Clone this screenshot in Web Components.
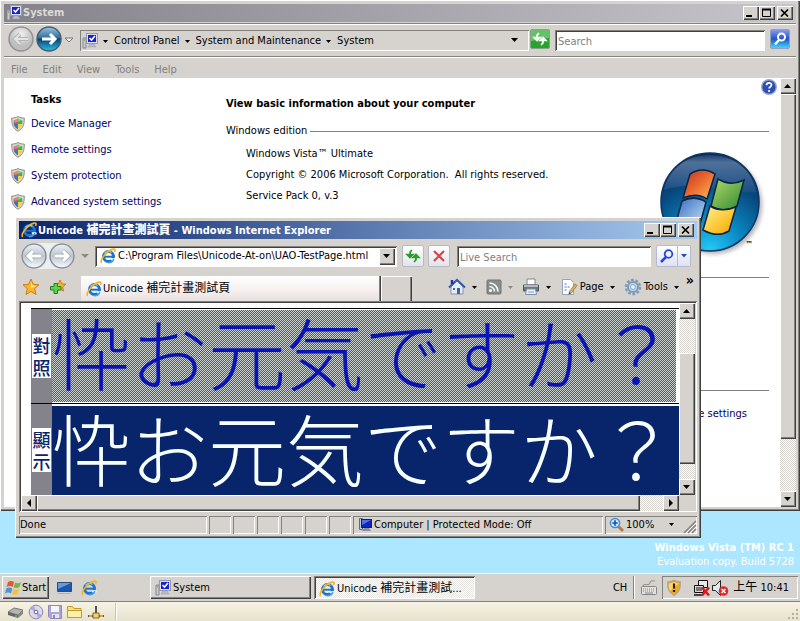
<!DOCTYPE html>
<html lang="en">
<head>
<meta charset="utf-8">
<title>Desktop</title>
<style>
html, body { margin: 0; height: 100%; overflow: hidden; }
body { --face: #d6d3ce; --navy: #0a246a; --link: #000066;
  --out: inset 1px 1px #fff, inset -1px -1px #404040, inset -2px -2px #84827e;
  --in: inset 1px 1px #84827e, inset -1px -1px #fff, inset 2px 2px #404040;
  --thin: inset 1px 1px #84827e, inset -1px -1px #fff;
  font: 11px/14px "DejaVu Sans Condensed", "Noto Sans CJK TC", sans-serif; color: #000; }
</style>
</head>
<body>
<desk-shell></desk-shell>
<script>
const base = `<style>
*{box-sizing:border-box}
button,input{font:inherit;color:inherit;margin:0;border:0;padding:0;background:none;border-radius:0}
a{color:inherit;text-decoration:none}
</style>`;
function define(name, html, setup) {
  const t = document.createElement('template');
  t.innerHTML = base + html;
  customElements.define(name, class extends HTMLElement {
    constructor() { super(); this.attachShadow({ mode: 'open' }).append(t.content.cloneNode(true)); }
    connectedCallback() { if (setup) setup(this, this.shadowRoot); }
  });
}

const monitor = `<path d="M1 5h3v10H1z" fill="#c9cdd2" stroke="#888"/><path d="M2 7h1" stroke="#3a3"/><rect x="4.500" y=".5" width="11" height="10" fill="#dde" stroke="#99a"/><rect x="6" y="2" width="8" height="7" fill="#1322d8"/><path d="M7.500 5l2 2 3.500-4" fill="none" stroke="#fff" stroke-width="1.600"/><path d="M8 11h4l2 3H6z" fill="#b8bcc4" stroke="#99a" stroke-width=".5"/>`;
const ie = `<circle cx="8.500" cy="8.500" r="5" fill="none" stroke="#1d74cf" stroke-width="3"/><path d="M5 8.700h8.500" stroke="#1d74cf" stroke-width="2"/><path d="M10.500 10.300h5v2.200h-4z" fill="#fff"/><path d="M13.900 11c-1 2.600-3.200 3.900-5.900 3.800" fill="none" stroke="#3ea1ee" stroke-width="1.600"/><path d="M4.500 5.200a5.200 5.200 0 0 1 7-.7" fill="none" stroke="#8cd0fa" stroke-width="1.200"/><path d="M1.700 14.800C-.8 12.500 7 2.200 13.200 1.100c2.200-.3 2.200 1.300 1.300 2.800" fill="none" stroke="#f2b51b" stroke-width="1.600"/>`;
const icons = {
  monitor: [16, 16, monitor],
  ie: [16, 16, ie],
  screen: [16, 16, `<path d="M3.500 1.500h3v11h-3z" fill="#c9cdd2" stroke="#667"/><rect x="5.500" y="2.500" width="10" height="8" fill="#1026b8" stroke="#223"/><path d="M6 3h9l-9 5z" fill="#4c72ee"/><path d="M8 11h5l2 3H6z" fill="#8b9098"/>`],
  shield: [16, 18, `<path d="M8 1.500c2 1.200 4 1.600 6.300 1.600 0 6.500-1 10-6.300 13.200C2.700 13.100 1.700 9.600 1.700 3.100 4 3.100 6 2.700 8 1.500z" fill="#dcdad2" stroke="#8b8b85"/><path d="M8 3.500V9H3.700V4.900C5.400 4.800 6.700 4.400 8 3.500z" fill="#d2504a"/><path d="M8 3.500V9h4.300V4.900C10.600 4.800 9.300 4.400 8 3.500z" fill="#4caf45"/><path d="M3.700 9H8v5.500C5.500 13 4.100 11.400 3.700 9z" fill="#3c74cd"/><path d="M12.300 9H8v5.500c2.500-1.500 3.900-3.100 4.300-5.500z" fill="#f4d04a"/><path d="M3 4c4 0 7-1 10 1l-8 3z" fill="#fff" opacity=".3"/>`],
  backOff: [26, 26, `<defs><radialGradient id="g" cy=".3"><stop offset="0" stop-color="#f2f2f2"/><stop offset="1" stop-color="#bdbdbd"/></radialGradient></defs><circle cx="13" cy="13" r="12" fill="url(#g)" stroke="#929292" stroke-width="1.500"/><path d="M20 13H8M12 8l-5 5 5 5" fill="none" stroke="#b4b4b4" stroke-width="4"/><path d="M20 13H8M12 8l-5 5 5 5" fill="none" stroke="#e4e4e4" stroke-width="2"/>`],
  fwdOn: [26, 26, `<defs><linearGradient id="g" x2="0" y2="1"><stop offset="0" stop-color="#9fc4de"/><stop offset=".45" stop-color="#2f6f9f"/><stop offset=".5" stop-color="#08426f"/><stop offset="1" stop-color="#2bc0ec"/></linearGradient></defs><circle cx="13" cy="13" r="12" fill="url(#g)" stroke="#45606f" stroke-width="1.500"/><path d="M6 13h12M14 8l5 5-5 5" fill="none" stroke="#fff" stroke-width="3"/>`],
  ieBack: [26, 26, `<defs><linearGradient id="g" x2="0" y2="1"><stop offset="0" stop-color="#eef1f4"/><stop offset=".5" stop-color="#bcc5cf"/><stop offset="1" stop-color="#fbfcff"/></linearGradient></defs><circle cx="13" cy="13" r="12" fill="url(#g)" stroke="#87929c" stroke-width="1.500"/><path d="M20 13H8M12 8l-5 5 5 5" fill="none" stroke="#9aa9b8" stroke-width="4.500"/><path d="M20 13H8M12 8l-5 5 5 5" fill="none" stroke="#fff" stroke-width="3"/>`],
  ieFwd: [26, 26, `<defs><linearGradient id="g" x2="0" y2="1"><stop offset="0" stop-color="#eef1f4"/><stop offset=".5" stop-color="#bcc5cf"/><stop offset="1" stop-color="#fbfcff"/></linearGradient></defs><circle cx="13" cy="13" r="12" fill="url(#g)" stroke="#87929c" stroke-width="1.500"/><path d="M6 13h12M14 8l5 5-5 5" fill="none" stroke="#9aa9b8" stroke-width="4.500"/><path d="M6 13h12M14 8l5 5-5 5" fill="none" stroke="#fff" stroke-width="3"/>`],
  go: [20, 20, `<rect x=".5" y=".5" width="19" height="19" rx="1.500" fill="#27a32e" stroke="#87a487"/><path d="M1 1h18v8L1 12z" fill="#73c975" opacity=".8"/><path d="M9 4L7 6v4M4 8.500h6L7 11.500zM11 16l2-2v-4M10 11.500h6L13 8.500z" fill="#fff" stroke="#fff" stroke-width="1.600"/>`],
  refresh: [20, 20, `<path d="M9 4L7 6v4M4 8.500h6L7 11.500zM11 16l2-2v-4M10 11.500h6L13 8.500z" fill="#2c9d2c" stroke="#2c9d2c" stroke-width="1.600"/>`],
  stop: [20, 20, `<path d="M5 5l10 10M15 5L5 15" stroke="#d5474b" stroke-width="2.200"/>`],
  find: [20, 20, `<defs><linearGradient id="g" x2="0" y2="1"><stop offset="0" stop-color="#8c9df0"/><stop offset=".5" stop-color="#1f55cf"/><stop offset="1" stop-color="#46e0f4"/></linearGradient></defs><rect x=".5" y=".5" width="19" height="19" rx="1.500" fill="url(#g)" stroke="#8fa2c2"/><circle cx="11.500" cy="8" r="3.500" fill="none" stroke="#fff" stroke-width="2"/><path d="M9 11l-4 4.500" stroke="#fff" stroke-width="2.500"/>`],
  findBlue: [16, 16, `<circle cx="9.500" cy="6" r="3.800" fill="#e9f2ff" stroke="#2746e0" stroke-width="1.800"/><path d="M7 9l-5 5" stroke="#2746e0" stroke-width="2.500"/>`],
  help: [16, 16, `<circle cx="8" cy="8" r="7.300" fill="#2d4fb0" stroke="#9aa7cf" stroke-width="1.400"/><path d="M5.500 6.300c0-3.300 5-3.200 5-.3 0 1.700-2.400 1.800-2.400 3.600M8.100 11v2" fill="none" stroke="#fff" stroke-width="1.700"/>`],
  down: [8, 8, `<path d="M0 2h7L3.500 6z" fill="#000"/>`],
  downSm: [6, 8, `<path d="M0 3h5L2.500 6z" fill="#000"/>`],
  downBlue: [8, 8, `<path d="M1 2h6L4 5.500z" fill="#2746c0"/>`],
  downGray: [8, 8, `<path d="M0 2h8L4 6z" fill="#8d8b88"/>`],
  downGraySm: [6, 8, `<path d="M0 3h5L2.500 6z" fill="#8d8b88"/>`],
  downHollow: [10, 8, `<path d="M1 2h8L5 6z" fill="#eee" stroke="#777"/>`],
  star: [18, 18, `<path d="M9 1l2.300 5.300 5.700.5-4.300 3.800L14 16.500 9 13.400 4 16.500l1.300-5.900L1 6.800l5.700-.5z" fill="#fbb528" stroke="#d47c12"/><path d="M9 3.500l1.500 4 4 .5-5.500 2z" fill="#ffe9a0"/>`],
  addStar: [18, 18, `<path d="M11 2l1.700 3.800 4.200.4-3.200 2.800.9 4.200-3.600-2.200-3.600 2.200 1-4.200L5.200 6.200l4.200-.4z" fill="#fbb528" stroke="#d47c12"/><path d="M5 5.500h3.500v3H12V12H8.500v3.500H5V12H1.500V8.500H5z" fill="#5fd253" stroke="#18851b"/>`],
  home: [18, 18, `<path d="M3 9v7h12V9L9 3z" fill="#e4eef8" stroke="#7d93b5"/><path d="M1 9.500L9 1.800l8 7.700" fill="none" stroke="#3a56b0" stroke-width="2"/><path d="M4 2v4" stroke="#1c36a8" stroke-width="2.500"/><path d="M9 10h3v6H9z" fill="#4a6189"/><path d="M5 10h2v2H5z" fill="#3b62c8"/>`],
  rss: [16, 16, `<rect x="1" y="1" width="14" height="14" rx="1" fill="#8b8b8b" stroke="#757575"/><circle cx="4.500" cy="11.500" r="1.500" fill="#fff"/><path d="M3.500 7.500a5 5 0 0 1 5 5M3.500 4a8.500 8.500 0 0 1 8.500 8.500" fill="none" stroke="#fff" stroke-width="1.600"/>`],
  printer: [18, 18, `<path d="M5 1h8v6H5z" fill="#fff" stroke="#888"/><path d="M1.500 7h15v6h-15z" fill="#6f7780" stroke="#4c535b"/><path d="M2 7h14v2H2z" fill="#b4bac0"/><path d="M4.500 11h9l1 5.500h-11z" fill="#e8f2fc" stroke="#7f8fa3"/><path d="M6 14h6" stroke="#6fa4d8"/>`],
  page: [18, 18, `<path d="M2.500 1.500h8l3 3v12h-11z" fill="#fff" stroke="#96a4b8"/><path d="M4.500 6h3M4.500 9h5M4.500 12h3" stroke="#4b6fc0" stroke-dasharray="2 1"/><path d="M9 14l6-8 2 1.500-6 8z" fill="#d9b26a" stroke="#8f6c36" stroke-width=".7"/><path d="M9 14l-.5 2.500L11 15.500z" fill="#444"/>`],
  gear: [18, 18, `<circle cx="9" cy="9" r="7" fill="none" stroke="#7b9cbc" stroke-width="2.500" stroke-dasharray="2.700 1.700"/><circle cx="9" cy="9" r="5" fill="#c6dcee" stroke="#7b9cbc" stroke-width="2"/><circle cx="9" cy="9" r="2.500" fill="#f4f4f2" stroke="#86a4c0"/>`],
  zoom: [16, 16, `<path d="M9 9l5 5" stroke="#b87a4a" stroke-width="3"/><circle cx="6" cy="6" r="4.600" fill="#cfe8ff" stroke="#4a8ed0" stroke-width="1.500"/><path d="M6 3.300v5.400M3.300 6h5.400" stroke="#1456b0" stroke-width="1.700"/>`],
  grip: [14, 14, `<path d="M13 1L1 13M13 5l-8 8M13 9l-4 4" stroke="#84827e" stroke-width="1.600"/><path d="M14 2L3 13M14 6l-7 7M14 10l-3 3" stroke="#fff"/>`],
  dots: [12, 12, `<path d="M9 2h2M5 6h2M9 6h2M1 10h2M5 10h2M9 10h2" stroke="#b5b09c" stroke-width="2"/>`],
  flag: [18, 18, `<path d="M4 3c2-1.500 4-1.500 6 0L8.700 8C7 6.800 5 6.800 2.700 8z" fill="#e4572b"/><path d="M11 3.500c2 1 4 1 6-.3L15.500 8c-2 1.300-4 1.300-5.800.3z" fill="#72b840"/><path d="M2.300 9.500c2-1.300 4-1.300 6 0L7 14.500c-2-1.200-4-1.200-6 0z" fill="#4b93dc"/><path d="M9.400 10c2 1 4 1 5.800-.3l-1.400 5c-2 1.300-4 1.300-5.800.3z" fill="#f8c22e"/>`],
  desk: [18, 16, `<path d="M1.500 2.500h14v9h-14z" fill="#1d57ac" stroke="#3a4a60"/><path d="M2 3h13L2 9z" fill="#5e9be0"/><path d="M1 13h13l2 1H3z" fill="#a8b0b8"/>`],
  disk: [18, 14, `<path d="M1 7l6-4 9 2-5 5z" fill="#b5b5b5" stroke="#777"/><path d="M1 7v3l10 3V10z" fill="#666"/><path d="M11 10v3l5-4V5z" fill="#8a8a8a"/><path d="M8 11h2" stroke="#4f4"/>`],
  cd: [16, 16, `<circle cx="8" cy="8" r="6.800" fill="#dcd8ee" stroke="#8d88ad"/><path d="M8 8L2 5a7 7 0 0 1 4-3.500zM8 8l6 3a7 7 0 0 1-4 3.500z" fill="#b3aade"/><circle cx="8" cy="8" r="1.800" fill="#fff" stroke="#67628a"/>`],
  floppy: [16, 16, `<path d="M1.500 1.500h13v13h-11l-2-2z" fill="#aaa5d6" stroke="#8d88bd"/><path d="M4 2h8v6H4z" fill="#f5f4ff"/><path d="M5 10h7v4H5z" fill="#e3e1f2"/><path d="M6 11h2v3H6z" fill="#8d88bd"/>`],
  folder: [18, 16, `<path d="M1.500 13.500v-11h5l1.500 2h7v9z" fill="#f6dc84" stroke="#c09a2a"/><path d="M1.500 13.500v-7h14v7z" fill="#fff0a8" stroke="#c09a2a"/>`],
  net: [18, 16, `<path d="M9 2v8M1 12h16" stroke="#555" stroke-width="2"/><path d="M6 9h6v5H6z" fill="#f0d56a" stroke="#82671a"/><path d="M2 11h3v2H2zM13 11h3v2h-3z" fill="#cfa93a"/>`],
  keyboard: [18, 16, `<path d="M3 6c0-3 7 0 7-3s3-2 5-2" fill="none" stroke="#868686"/><rect x="1.500" y="6.500" width="15" height="8" rx="1" fill="#e4e2de" stroke="#868686"/><path d="M3 9h12M3 11h12" stroke="#868686" stroke-dasharray="1 1"/><path d="M5 13h8" stroke="#868686"/>`],
  warn: [16, 18, `<path d="M8 1.500c2 1.200 4 1.600 6.300 1.600 0 6.500-1 10-6.300 13.200C2.700 13.100 1.700 9.600 1.700 3.100 4 3.100 6 2.700 8 1.500z" fill="#f2a81d" stroke="#b5a68a" stroke-width="1.500"/><path d="M8 3c2 1 3.500 1.300 5 1.300L4 12C3 9 2.800 7 2.800 4.300 5 4.300 6.500 4 8 3z" fill="#ffd569"/><path d="M8 4.500v5M8 11v2" stroke="#222" stroke-width="2.200"/>`],
  netOff: [18, 18, `<path d="M5.500 1.500h9v7h-9z" fill="#e8e8e8" stroke="#111"/><path d="M1.500 6.500h9v7h-9z" fill="#cfd8e0" stroke="#111"/><path d="M3 8h6v4H3z" fill="#777"/><path d="M1 16h8" stroke="#444" stroke-width="2"/><path d="M9 8.500l7 8M16 8.500l-7 8" stroke="#e01818" stroke-width="2.500"/>`],
  mute: [18, 18, `<path d="M1.500 6.500h3l5-5v15l-5-5h-3z" fill="#dfe9f2" stroke="#222"/><circle cx="12.500" cy="12" r="4.800" fill="#e02828"/><path d="M10.500 10l4 4M14.500 10l-4 4" stroke="#fff" stroke-width="1.500"/>`],
  min: [12, 10, `<path d="M1 8h6" stroke="#000" stroke-width="2"/>`],
  max: [12, 10, `<path d="M1.500 1.500h8v7h-8z" fill="none" stroke="#000"/><path d="M1 1.500h9" stroke="#000" stroke-width="2"/>`],
  close: [12, 10, `<path d="M2 1.500l7 7M9 1.500l-7 7" stroke="#000" stroke-width="1.700"/>`],
  up: [8, 8, `<path d="M0 6h7L3.500 2z" fill="#000"/>`],
  left: [8, 8, `<path d="M6 0v8L2 4z" fill="#000"/>`],
  right: [8, 8, `<path d="M2 0v8l4-4z" fill="#000"/>`],
  orb: [108, 112, `<defs><radialGradient id="g" cy="1" r="1"><stop offset="0" stop-color="#21cbf7"/><stop offset=".35" stop-color="#0a86c0"/><stop offset=".7" stop-color="#064a80"/><stop offset="1" stop-color="#0a2c58"/></radialGradient><linearGradient id="h" x2="0" y2="1"><stop offset="0" stop-color="#254a7c"/><stop offset=".2" stop-color="#6d8bb0"/><stop offset="1" stop-color="#234f86"/></linearGradient><linearGradient id="r" x2="1" y2="1"><stop offset="0" stop-color="#b93420"/><stop offset=".45" stop-color="#e9642c"/><stop offset="1" stop-color="#fbc05c"/></linearGradient><linearGradient id="n" x2="1" y2="1"><stop offset="0" stop-color="#b4d96c"/><stop offset="1" stop-color="#2c8a30"/></linearGradient><linearGradient id="b" x2="1" y2="1"><stop offset="0" stop-color="#2f66bd"/><stop offset="1" stop-color="#cfe9fb"/></linearGradient><linearGradient id="y" x2="1" y2="1"><stop offset="0" stop-color="#fff0a0"/><stop offset=".6" stop-color="#fbc62e"/><stop offset="1" stop-color="#f09a1a"/></linearGradient><filter id="s"><feGaussianBlur stdDeviation="2"/></filter></defs><circle cx="53" cy="53" r="49" fill="#667" opacity=".5" filter="url(#s)"/><circle cx="50" cy="50" r="49" fill="url(#g)" stroke="#0c3560" stroke-width="1.500"/><path d="M50 3c25 0 43 16 46 37-25 3-60-14-92-2C9 17 26 3 50 3z" fill="url(#h)" opacity=".7"/><g stroke="#0a2444" stroke-width="1.500"><path d="M30 22c8-5 17-5 25 0l-8 25c-7-5-15-5-24-1z" fill="url(#r)"/><path d="M58 27c8 5 16 6 26 1l-7 26c-8 5-17 5-26 0z" fill="url(#n)"/><path d="M22 49c8-4 16-4 24 1l-7 26c-8-5-16-6-24-2z" fill="url(#b)"/><path d="M50 54c8 5 16 5 26 1l-7 24c-8 5-17 4-26-1z" fill="url(#y)"/></g>`]
};
define('ui-icon', `<style>:host{display:inline-block;flex:none;line-height:0}svg{display:block}</style>`, (el, root) => {
  const [w, h, body] = icons[el.getAttribute('name')];
  if (!root.querySelector('svg')) root.innerHTML += `<svg width="${w}" height="${h}" viewBox="0 0 ${w} ${h}" aria-hidden="true">${body}</svg>`;
});

define('win-frame', `<style>
:host{display:flex;flex-direction:column;background:var(--face);box-shadow:var(--out);padding:4px}
header{display:flex;align-items:center;height:18px;flex:none;padding:0 3px 0 2px;gap:1px;font-weight:bold;color:var(--title-ink,#fff);background:linear-gradient(90deg,var(--from),var(--to))}
b{flex:1;white-space:nowrap}
button{width:16px;height:14px;background:var(--face);box-shadow:var(--out);display:flex;align-items:center;padding:0 0 0 2px}
.x{margin-left:2px}
nav{display:flex}
main{flex:1;display:flex;flex-direction:column;min-height:0}
</style><header><slot name="icon"></slot><b><slot name="title"></slot></b><nav>
<button aria-label="Minimize"><ui-icon name="min"></ui-icon></button><button aria-label="Maximize"><ui-icon name="max"></ui-icon></button><button class="x" aria-label="Close"><ui-icon name="close"></ui-icon></button></nav></header><main><slot></slot></main>`);

define('scroll-bar', `<style>
:host{display:flex;flex-direction:column;width:16px;flex:none;background:repeating-conic-gradient(#fff 0 25%,var(--face) 0 50%) 0 0/2px 2px}
:host([across]){flex-direction:row;width:auto;height:16px}
button{width:16px;height:16px;flex:none;background:var(--face);box-shadow:var(--out);display:grid;place-items:center}
i{flex:var(--before,0) 0 0}u{flex:var(--size,1) 0 0;background:var(--face);box-shadow:var(--out)}s{flex:var(--after,1) 0 0}
.h{display:none}:host([across]) .h{display:grid}:host([across]) .v{display:none}
</style><button class="v" aria-label="Scroll up"><ui-icon name="up"></ui-icon></button><button class="h" aria-label="Scroll left"><ui-icon name="left"></ui-icon></button><i></i><u></u><s></s><button class="v" aria-label="Scroll down"><ui-icon name="down"></ui-icon></button><button class="h" aria-label="Scroll right"><ui-icon name="right"></ui-icon></button>`);

define('system-nav', `<style>
:host{display:flex;align-items:center;height:35px;flex:none;margin-top:1px;padding:0 6px 0 4px;box-shadow:inset 0 1px #84827e,inset 0 2px #fff,inset 0 -1px #fff,inset 0 -2px #84827e}
button{display:block;flex:none}
.pair{display:flex;gap:2px;align-items:center}
.crumbs{flex:1;display:flex;align-items:center;height:21px;margin:0 1px 0 6px;padding:0 10px 0 2px;gap:5px;box-shadow:var(--thin);white-space:nowrap}
.crumbs .end{margin-left:auto}
input{width:210px;height:21px;background:#fff;box-shadow:var(--in);padding:2px 3px 0;margin:0 5px}
input::placeholder{color:#808080;opacity:1}
</style><div class="pair"><button aria-label="Back"><ui-icon name="backOff"></ui-icon></button><button aria-label="Forward"><ui-icon name="fwdOn"></ui-icon></button><button aria-label="Recent pages"><ui-icon name="downHollow"></ui-icon></button></div>
<div class="crumbs"><ui-icon name="monitor"></ui-icon><ui-icon name="downSm"></ui-icon><a href="#cp">Control Panel</a><ui-icon name="downSm"></ui-icon><a href="#sm">System and Maintenance</a><ui-icon name="downSm"></ui-icon><a href="#sys">System</a><button class="end" aria-label="Previous locations"><ui-icon name="down"></ui-icon></button></div>
<button aria-label="Refresh"><ui-icon name="go"></ui-icon></button><input type="text" placeholder="Search" aria-label="Search"><button aria-label="Start search"><ui-icon name="find"></ui-icon></button>`);

define('menu-strip', `<style>:host{box-sizing:border-box;display:flex;gap:15px;height:20px;flex:none;padding:3px 7px 0;align-items:center;color:#808080}</style><button>File</button><button>Edit</button><button>View</button><button>Tools</button><button>Help</button>`);

define('task-list', `<style>
:host{display:block;width:222px;flex:none;padding:15px 6px}
b{display:block;margin:0 0 4px 21px}
a{display:flex;align-items:center;gap:5px;height:26px;color:var(--link)}
</style><b>Tasks</b><a href="#dm"><ui-icon name="shield"></ui-icon>Device Manager</a><a href="#rs"><ui-icon name="shield"></ui-icon>Remote settings</a><a href="#sp"><ui-icon name="shield"></ui-icon>System protection</a><a href="#as"><ui-icon name="shield"></ui-icon>Advanced system settings</a>`);

define('system-info', `<style>
:host{flex:1;display:block;position:relative;padding:19px 11px 0 0}
h1{font:inherit;font-weight:bold;margin:0 0 13px}
.rule{display:flex;align-items:center;gap:3px}
.rule::after,hr{content:"";flex:1;height:1px;background:#84827e;border:0;margin:0}
.ed{display:flex;height:139px}
.ed div{flex:1;padding:9px 0 0 20px}
p{margin:0 0 7px;white-space:pre}
.logo{display:flex;align-items:flex-end;height:126px;margin-right:16px}
sup{font-size:8px;line-height:8px;margin:0 0 15px -22px;font-weight:bold}
.help{position:absolute;right:3px;top:1px}
.name{margin-top:112px}
.change{text-align:right;padding:16px 22px 0 0;color:var(--link)}
</style><button class="help" aria-label="Help"><ui-icon name="help"></ui-icon></button><h1>View basic information about your computer</h1>
<div class="rule">Windows edition</div>
<section class="ed"><div><p>Windows Vista™ Ultimate</p><p>Copyright © 2006 Microsoft Corporation.  All rights reserved.</p><p>Service Pack 0, v.3</p></div><span class="logo"><ui-icon name="orb"></ui-icon><sup>™</sup></span></section>
<hr><hr class="name"><div class="change"><a href="#cs">Change settings</a></div>`);

define('system-window', `<style>
:host{display:block}
win-frame{height:100%;--from:#84828a;--to:#c6c5cc;--title-ink:#dcdad6}
.body{flex:1;display:flex;background:#fff;min-height:0}
scroll-bar{--size:345;--after:52}
</style><win-frame><ui-icon slot="icon" name="monitor"></ui-icon><span slot="title">System</span>
<system-nav></system-nav><menu-strip></menu-strip><div class="body"><task-list></task-list><system-info></system-info><scroll-bar></scroll-bar></div></win-frame>`);

define('browser-nav', `<style>
:host{display:flex;align-items:center;height:34px;flex:none;padding:0 6px 0 2px}
button{display:grid;place-items:center;flex:none}
.pair{display:flex;gap:2px;border-radius:14px;background:#eceef0;margin-right:6px}
.addr{flex:1;display:flex;align-items:center;background:#fff;box-shadow:var(--in);height:21px;padding:2px 2px 2px 5px;margin:0 5px 0 6px}
.addr input{flex:1;min-width:0;padding-left:2px}
.addr button{width:16px;height:17px;background:var(--face);box-shadow:var(--out)}
.sq{width:22px;height:22px;border:1px solid #b9b9c6;border-radius:2px;background:linear-gradient(#fff,#e3e3ec);margin-right:4px}
.search{width:194px;height:21px;background:#fff;box-shadow:var(--in);padding:2px 3px 0;margin:0 5px 0 3px}
.search::placeholder{color:#808080;opacity:1}
.fb{width:22px;height:22px;border:1px solid #b9b9d0;background:linear-gradient(#fff,#dde2f4);border-radius:2px 0 0 2px}
.fd{width:13px;height:22px;border:1px solid #b9b9d0;border-left:0;background:linear-gradient(#fff,#dde2f4);border-radius:0 2px 2px 0}
</style><div class="pair"><button aria-label="Back"><ui-icon name="ieBack"></ui-icon></button><button aria-label="Forward"><ui-icon name="ieFwd"></ui-icon></button></div><button aria-label="Recent pages"><ui-icon name="downGray"></ui-icon></button>
<div class="addr"><ui-icon name="ie"></ui-icon><input type="text" aria-label="Address" value="C:\\Program Files\\Unicode-At-on\\UAO-TestPage.html"><button aria-label="Show addresses"><ui-icon name="down"></ui-icon></button></div>
<button class="sq" aria-label="Refresh"><ui-icon name="refresh"></ui-icon></button><button class="sq" aria-label="Stop"><ui-icon name="stop"></ui-icon></button>
<input class="search" type="text" placeholder="Live Search" aria-label="Live Search"><button class="fb" aria-label="Search"><ui-icon name="findBlue"></ui-icon></button><button class="fd" aria-label="Search options"><ui-icon name="downBlue"></ui-icon></button>`);

define('browser-tabs', `<style>
:host{display:flex;align-items:center;height:28px;flex:none;padding:0 3px 0 3px}
button{display:flex;align-items:center;flex:none;gap:2px}
.fav{display:flex;gap:9px;margin-right:14px}
.tab{flex:1;height:25px;align-self:flex-end;gap:1px;background:linear-gradient(#fff,#f6efee 60%,#e6e0de);padding-left:5px;box-shadow:inset -1px 0 #404040,inset -2px 0 #84827e}
.tab span{font-size:12px}
.new{width:31px;height:25px;align-self:flex-end;box-shadow:inset 1px 1px #fff,inset -1px 0 #404040,inset -2px 0 #84827e;margin-right:36px}
.cmd{display:flex;align-items:center}
.cmd button{margin-right:8px;gap:6px}
.cmd .t{gap:2px}.cmd .t .d{margin-left:4px}
.cmd .more{align-self:flex-start;font-weight:bold;font-size:14px;margin:-5px 0 0 -2px}
</style><div class="fav"><button aria-label="Favorites"><ui-icon name="star"></ui-icon></button><button aria-label="Add to favorites"><ui-icon name="addStar"></ui-icon></button></div>
<button class="tab"><ui-icon name="ie"></ui-icon><div>Unicode <span>補完計畫測試頁</span></div></button><button class="new" aria-label="New tab"></button>
<div class="cmd"><button aria-label="Home"><ui-icon name="home"></ui-icon><ui-icon name="downSm"></ui-icon></button><button aria-label="Feeds"><ui-icon name="rss"></ui-icon><ui-icon name="downGraySm"></ui-icon></button><button aria-label="Print"><ui-icon name="printer"></ui-icon><ui-icon name="downSm"></ui-icon></button><button class="t"><ui-icon name="page"></ui-icon>Page<ui-icon class="d" name="downSm"></ui-icon></button><button class="t"><ui-icon name="gear"></ui-icon>Tools<ui-icon class="d" name="downSm"></ui-icon></button><button class="more" aria-label="More commands">»</button></div>`);

define('test-page', `<style>
:host{flex:1;display:grid;grid-template:minmax(0,1fr) 16px/minmax(0,1fr) 16px;min-height:0;background:var(--face);box-shadow:var(--in);padding:2px 2px 1px}
.view{background:#fff;padding:5px 0 0 10px}
table{border-collapse:collapse;width:100%;white-space:nowrap}
tr{border-top:1px solid #000}
th{width:21px;padding:0;background:#84828a;font:500 18px/22px "Noto Sans CJK TC",sans-serif;color:var(--navy)}
th span{display:block;width:19px;margin:auto;background:#fff}
td{padding:1px 0;font:300 78px/82px "Noto Sans CJK JP",sans-serif}
td span{display:block;height:92px;width:fit-content}
.sel{color:#0a14b4;background:repeating-conic-gradient(#405f7c 0 25%,#c9d0cd 0 50%) 0 0/2px 2px}
.dark td{padding:2px 0 0}
.dark td span{background:#08246b;color:#f8ffff;width:auto;height:89px}
.v{--before:35;--size:113;--after:15}
.h{--before:0;--size:603;--after:23}
</style><div class="view"><table><tr><th><span>對<br>照</span></th><td><span class="sel">忰お元気ですか？</span></td></tr><tr class="dark"><th><span>顯<br>示</span></th><td><span>忰お元気ですか？</span></td></tr></table></div><scroll-bar class="v"></scroll-bar><scroll-bar class="h" across></scroll-bar>`);

define('status-strip', `<style>
:host{display:flex;gap:2px;height:18px;flex:none;margin-top:4px}
div{box-shadow:var(--thin);display:flex;align-items:center;white-space:nowrap}
.done{flex:1;padding-left:1px}.s{width:22px}
.zone{width:250px;padding-left:3px;gap:2px}
.zoom{width:92px;padding-left:4px;gap:1px}
.zoom button{margin-left:14px}.zoom .g{margin:4px 0 0 auto}
</style><div class="done">Done</div><div class="s"></div><div class="s"></div><div class="s"></div><div class="s"></div><div class="s"></div><div class="s"></div><div class="zone"><ui-icon name="screen"></ui-icon>Computer | Protected Mode: Off</div><div class="zoom"><ui-icon name="zoom"></ui-icon>100%<button aria-label="Zoom level"><ui-icon name="downSm"></ui-icon></button><ui-icon class="g" name="grip"></ui-icon></div>`);

define('browser-window', `<style>
:host{display:block}
win-frame{height:100%;--from:#0a246a;--to:#a6caf0}
.c{font-size:12px}
</style><win-frame><ui-icon slot="icon" name="ie"></ui-icon><span slot="title">Unicode <span class="c">補完計畫測試頁</span> - Windows Internet Explorer</span>
<browser-nav></browser-nav><browser-tabs></browser-tabs><test-page></test-page><status-strip></status-strip></win-frame>`);

define('task-bar', `<style>
:host{display:flex;align-items:center;height:29px;flex:none;background:var(--face);box-shadow:inset 0 1px #fff,inset 0 -1px #84827e;padding:0 2px;white-space:nowrap}
button{display:flex;align-items:center;flex:none;height:23px}
.start{width:47px;box-shadow:var(--out);padding-left:2px}
.q{display:flex;gap:7px;margin:0 53px 0 7px}
.w{width:161px;box-shadow:var(--out);padding-left:5px;gap:2px;margin-right:3px}
.w.on{box-shadow:var(--in);background:repeating-conic-gradient(#fff 0 25%,#e6e4e0 0 50%) 0 0/2px 2px;padding-top:2px}
.w span{font-size:12px}
.lang{margin-left:auto;padding-right:6px;border-right:1px solid #84827e;box-shadow:1px 0 #fff}
.key{margin:0 4px 0 6px}
.tray{display:flex;align-items:center;height:23px;box-shadow:var(--thin);padding:0 9px 0 4px}
.tray .g{margin-right:11px}
.tray time{margin-left:4px}
.tray time span{font-size:12px}
</style><button class="start"><ui-icon name="flag"></ui-icon>Start</button><div class="q"><button aria-label="Show desktop"><ui-icon name="desk"></ui-icon></button><button aria-label="Internet Explorer"><ui-icon name="ie"></ui-icon></button></div>
<button class="w"><ui-icon name="monitor"></ui-icon>System</button><button class="w on"><ui-icon name="ie"></ui-icon><div>Unicode <span>補完計畫測試</span>...</div></button>
<button class="lang">CH</button><button class="key" aria-label="Input method"><ui-icon name="keyboard"></ui-icon></button><div class="tray"><ui-icon class="g" name="warn"></ui-icon><ui-icon name="netOff"></ui-icon><ui-icon name="mute"></ui-icon><time><span>上午</span> 10:41</time></div>`);

define('dock-bar', `<style>
:host{display:flex;align-items:center;height:19px;flex:none;background:linear-gradient(#f6f3e4,#e6e2cc);padding:0 1px 0 7px;gap:3px}
.sep{width:1px;height:17px;background:#c8c4b0;margin-left:7px;box-shadow:1px 0 #fff}
.e{margin:5px 0 0 auto}
</style><ui-icon name="disk"></ui-icon><ui-icon name="cd"></ui-icon><ui-icon name="floppy"></ui-icon><ui-icon name="folder"></ui-icon><ui-icon name="net"></ui-icon><span class="sep"></span><ui-icon class="e" name="dots"></ui-icon>`);

define('desk-shell', `<style>
:host{display:flex;flex-direction:column;height:100%}
.desk{flex:1;position:relative;background:#ace6ff;min-height:0}
system-window{position:absolute;inset:0 0 62px 0}
browser-window{position:absolute;inset:217px 99px 35px 15px}
.mark{position:absolute;right:6px;bottom:4px;text-align:right;color:#fff}
.mark b{display:block}
</style><div class="desk"><system-window></system-window><browser-window></browser-window><div class="mark"><b>Windows Vista (TM) RC 1</b>Evaluation copy. Build 5728</div></div><task-bar></task-bar><dock-bar></dock-bar>`);
</script>
</body>
</html>
